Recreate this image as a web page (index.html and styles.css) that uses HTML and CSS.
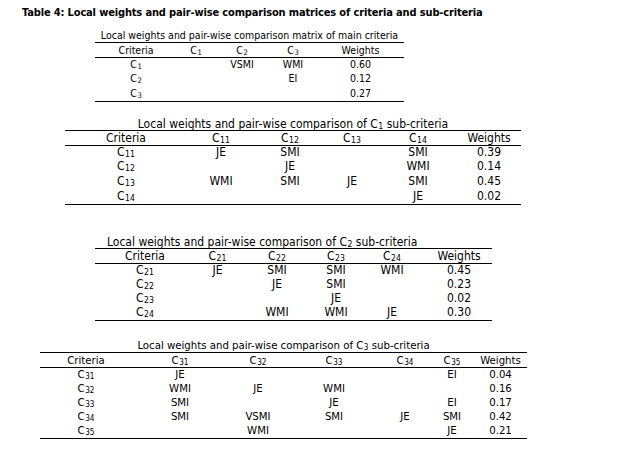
FILE: index.html
```html
<!DOCTYPE html>
<html>
<head>
<meta charset="utf-8">
<link rel="stylesheet" href="styles.css">
</head>
<body>
<div class="title">Table 4: Local weights and pair-wise comparison matrices of criteria and sub-criteria</div>

<section class="block b1">
  <div class="cap">Local weights and pair-wise comparison matrix of main criteria</div>
  <table class="t">
    <colgroup><col style="width:82px"><col style="width:38px"><col style="width:54px"><col style="width:48px"><col style="width:87px"></colgroup>
    <thead><tr><th>Criteria</th><th>C<span class="s">1</span></th><th>C<span class="s">2</span></th><th>C<span class="s">3</span></th><th>Weights</th></tr></thead>
    <tbody>
      <tr><td>C<span class="s">1</span></td><td></td><td>VSMI</td><td>WMI</td><td class="w">0.60</td></tr>
      <tr><td>C<span class="s">2</span></td><td></td><td></td><td>EI</td><td class="w">0.12</td></tr>
      <tr><td>C<span class="s">3</span></td><td></td><td></td><td></td><td class="w">0.27</td></tr>
    </tbody>
  </table>
</section>

<section class="block b2">
  <div class="cap">Local weights and pair-wise comparison of C<span class="s">1</span> sub-criteria</div>
  <table class="t">
    <colgroup><col style="width:122px"><col style="width:68px"><col style="width:70px"><col style="width:54px"><col style="width:78px"><col style="width:64px"></colgroup>
    <thead><tr><th>Criteria</th><th>C<span class="s">11</span></th><th>C<span class="s">12</span></th><th>C<span class="s">13</span></th><th>C<span class="s">14</span></th><th>Weights</th></tr></thead>
    <tbody>
      <tr><td>C<span class="s">11</span></td><td>JE</td><td>SMI</td><td></td><td>SMI</td><td class="w">0.39</td></tr>
      <tr><td>C<span class="s">12</span></td><td></td><td>JE</td><td></td><td>WMI</td><td class="w">0.14</td></tr>
      <tr><td>C<span class="s">13</span></td><td>WMI</td><td>SMI</td><td>JE</td><td>SMI</td><td class="w">0.45</td></tr>
      <tr><td>C<span class="s">14</span></td><td></td><td></td><td></td><td>JE</td><td class="w">0.02</td></tr>
    </tbody>
  </table>
</section>

<section class="block b3">
  <div class="cap left">Local weights and pair-wise comparison of C<span class="s">2</span> sub-criteria</div>
  <table class="t">
    <colgroup><col style="width:100px"><col style="width:45px"><col style="width:74px"><col style="width:44px"><col style="width:68px"><col style="width:66px"></colgroup>
    <thead><tr><th>Criteria</th><th>C<span class="s">21</span></th><th>C<span class="s">22</span></th><th>C<span class="s">23</span></th><th>C<span class="s">24</span></th><th>Weights</th></tr></thead>
    <tbody>
      <tr><td>C<span class="s">21</span></td><td>JE</td><td>SMI</td><td>SMI</td><td>WMI</td><td class="w">0.45</td></tr>
      <tr><td>C<span class="s">22</span></td><td></td><td>JE</td><td>SMI</td><td></td><td class="w">0.23</td></tr>
      <tr><td>C<span class="s">23</span></td><td></td><td></td><td>JE</td><td></td><td class="w">0.02</td></tr>
      <tr><td>C<span class="s">24</span></td><td></td><td>WMI</td><td>WMI</td><td>JE</td><td class="w">0.30</td></tr>
    </tbody>
  </table>
</section>

<section class="block b4">
  <div class="cap">Local weights and pair-wise comparison of C<span class="s">3</span> sub-criteria</div>
  <table class="t">
    <colgroup><col style="width:92px"><col style="width:96px"><col style="width:60px"><col style="width:92px"><col style="width:50px"><col style="width:44px"><col style="width:53px"></colgroup>
    <thead><tr><th>Criteria</th><th>C<span class="s">31</span></th><th>C<span class="s">32</span></th><th>C<span class="s">33</span></th><th>C<span class="s">34</span></th><th>C<span class="s">35</span></th><th>Weights</th></tr></thead>
    <tbody>
      <tr><td>C<span class="s">31</span></td><td>JE</td><td></td><td></td><td></td><td>EI</td><td class="w">0.04</td></tr>
      <tr><td>C<span class="s">32</span></td><td>WMI</td><td>JE</td><td>WMI</td><td></td><td></td><td class="w">0.16</td></tr>
      <tr><td>C<span class="s">33</span></td><td>SMI</td><td></td><td>JE</td><td></td><td>EI</td><td class="w">0.17</td></tr>
      <tr><td>C<span class="s">34</span></td><td>SMI</td><td>VSMI</td><td>SMI</td><td>JE</td><td>SMI</td><td class="w">0.42</td></tr>
      <tr><td>C<span class="s">35</span></td><td></td><td>WMI</td><td></td><td></td><td>JE</td><td class="w">0.21</td></tr>
    </tbody>
  </table>
</section>
</body>
</html>
```
FILE: styles.css
```css
html, body {
  margin: 0;
  padding: 0;
  background: #fff;
  color: #000;
}
body {
  width: 617px;
  height: 449px;
  overflow: hidden;
  font-family: "DejaVu Sans Condensed", "DejaVu Sans", sans-serif;
}
.title {
  padding: 6px 0 0 22px;
  height: 14px;
  line-height: 14px;
  font-size: 11px;
  letter-spacing: -0.15px;
  font-weight: bold;
  white-space: nowrap;
}
.block {
  display: flex;
  flex-direction: column;
  font-size: var(--fs);
}
.cap {
  height: 13px;
  line-height: var(--cl, 13px);
  text-align: center;
  white-space: nowrap;
}
.cap.left {
  text-align: left;
  padding-left: 12px;
}
.t {
  border-collapse: collapse;
  table-layout: fixed;
  border-top: 1px solid #000;
  border-bottom: 1px solid #000;
  font-size: var(--fs);
}
.t th {
  font-weight: normal;
  height: 14px;
  padding: 0;
  line-height: 13px;
  border-bottom: 1px solid #000;
  text-align: center;
  white-space: nowrap;
  vertical-align: middle;
}
.t tbody tr {
  height: var(--rh);
}
.t td {
  padding: 0;
  text-align: center;
  white-space: nowrap;
  line-height: 11px;
  height: var(--rh);
  vertical-align: top;
  padding-top: 1px;
  box-sizing: border-box;
}
.s {
  font-size: 0.72em;
  line-height: 1px;
  vertical-align: -1px;
  margin-left: 0.5px;
}
.b1 { --fs: 10.5px; --rh: 14.5px; margin: 9px 0 0 95px; width: 309px; }
.b2 { --fs: 12px; --rh: 14.75px; --cl: 15px; margin: 15.5px 0 0 65px; width: 456px; }
.b3 { --fs: 12px; --rh: 14.25px; --cl: 15px; margin: 30px 0 0 95px; width: 397px; }
.b4 { --fs: 11.3px; --rh: 14.2px; --cl: 14px; margin: 18px 0 0 40px; width: 487px; }
```
